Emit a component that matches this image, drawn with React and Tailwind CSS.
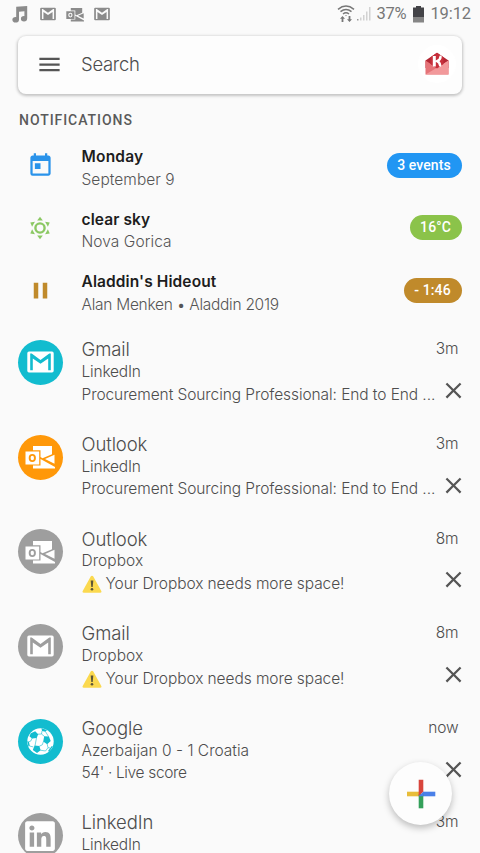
import { FaLinkedin } from "react-icons/fa";
import { MdClose, MdMenu, MdPause, MdToday } from "react-icons/md";

const infoRows = [
  {
    id: "calendar",
    icon: <MdToday className="size-[27px] text-[#2a93ea]" />,
    title: "Monday",
    titleClass: "tracking-[0.2px]",
    subtitle: "September 9",
    subtitleClass: "tracking-[0.05px]",
    pill: "3 events",
    pillClass: "w-[75px] bg-[#2196f3]",
  },
  {
    id: "weather",
    icon: <SunIcon />,
    title: "clear sky",
    titleClass: "tracking-[0.1px]",
    subtitle: "Nova Gorica",
    subtitleClass: "tracking-[0.07px]",
    pill: "16°C",
    pillClass: "w-[52px] bg-[#8bc34a]",
  },
  {
    id: "music",
    icon: <MdPause className="size-[27px] text-[#c08a2b]" />,
    title: "Aladdin's Hideout",
    titleClass: "tracking-[0.1px]",
    subtitle: "Alan Menken • Aladdin 2019",
    subtitleClass: "tracking-[-0.27px]",
    pill: "- 1:46",
    pillClass: "w-[58px] bg-[#c08a2b]",
  },
];

const messages = [
  {
    id: 1,
    icon: <GmailIcon className="w-[27px] h-[22px]" />,
    color: "bg-[#12bccf]",
    app: "Gmail",
    from: "LinkedIn",
    fromClass: "tracking-[-0.2px]",
    text: "Procurement Sourcing Professional: End to End ...",
    textClass: "tracking-[-0.08px]",
    time: "3m",
  },
  {
    id: 2,
    icon: <OutlookIcon className="w-[30px] h-[24px]" />,
    color: "bg-[#ff9809]",
    app: "Outlook",
    from: "LinkedIn",
    fromClass: "tracking-[-0.2px]",
    text: "Procurement Sourcing Professional: End to End ...",
    textClass: "tracking-[-0.08px]",
    time: "3m",
  },
  {
    id: 3,
    icon: <OutlookIcon className="w-[30px] h-[24px]" />,
    color: "bg-[#9e9e9e]",
    app: "Outlook",
    from: "Dropbox",
    fromClass: "tracking-[0.05px]",
    text: "Your Dropbox needs more space!",
    textClass: "tracking-[-0.08px]",
    warning: true,
    time: "8m",
  },
  {
    id: 4,
    icon: <GmailIcon className="w-[27px] h-[22px]" />,
    color: "bg-[#9e9e9e]",
    app: "Gmail",
    from: "Dropbox",
    fromClass: "tracking-[0.05px]",
    text: "Your Dropbox needs more space!",
    textClass: "tracking-[-0.08px]",
    warning: true,
    time: "8m",
  },
  {
    id: 5,
    icon: <FootballIcon />,
    color: "bg-[#12bccf]",
    app: "Google",
    from: "Azerbaijan 0 - 1 Croatia",
    fromClass: "tracking-[0px]",
    text: "54' · Live score",
    textClass: "tracking-[-0.35px]",
    time: "now",
  },
  {
    id: 6,
    icon: <FaLinkedin className="size-[34px]" />,
    color: "bg-[#9e9e9e]",
    app: "LinkedIn",
    from: "LinkedIn",
    fromClass: "tracking-[-0.2px]",
    text: "",
    textClass: "",
    time: "3m",
  },
];

function SunIcon() {
  return (
    <svg viewBox="0 0 24 24" className="size-[24px]" fill="#8bc863">
      <circle cx="12" cy="12" r="4.6" fill="none" stroke="#8bc863" strokeWidth="2.4" />
      {[0, 60, 120, 180, 240, 300].map((angle) => (
        <path key={angle} d="M12 .8l2.8 3.7H9.2z" transform={`rotate(${angle} 12 12)`} />
      ))}
    </svg>
  );
}

function FootballIcon() {
  return (
    <svg viewBox="0 0 27 27" className="size-[27px]">
      <circle cx="13.5" cy="13.5" r="13.2" fill="#fff" />
      <g fill="#12bccf">
        <path d="M3.8 5.2l4.400-2 3 3-1.500 3.900-4.700.4-2.600-2.300z" />
        <path d="M17.200 8.300l4.700.3 1.800 4.500-3.500 3.100-4-2.700z" />
        <path d="M7.600 17.500l4.700.5 1.400 4.300-3.700 2.700-4.200-3z" />
        <path d="M14.500 .3l5.500 1.600-1.500 1.800-3.500-.7zM24.800 18l1 .5-3.600 5.200-1.200-.8zM.3 13l1.600.8.9 4.300-1.300.3z" />
      </g>
      <path
        fill="none"
        stroke="#12bccf"
        strokeWidth=".6"
        d="M10.900 6.200l3.600-.2 3 2.500M14.500 6l.5-3M18.500 3.700l3.200 5.100M5.200 10.100l-1.500 3-1.800.7M2.800 18.100l3.500.8M9.500 9.800l-1.500 8M16.500 13.300l-1.200 3.500-3.100 1.500M20.100 15.700l.9 4-2.500 3.300-5.100-.8M21 19.700l2 .3"
      />
    </svg>
  );
}

function GmailIcon({ className }) {
  return (
    <svg viewBox="0 0 27 22" className={className}>
      <path
        fill="currentColor"
        fillRule="evenodd"
        d="M2 .5h23a1.7 1.7 0 0 1 1.7 1.7v17.6a1.7 1.7 0 0 1-1.7 1.7H2A1.7 1.7 0 0 1 .3 19.8V2.2A1.7 1.7 0 0 1 2 .5zM3.2 2.5v16.8h2.6V7.5l7.7 5.3 7.7-5.3v11.8h2.6V2.5h-1.5L13.5 8.900 4.700 2.500z"
      />
    </svg>
  );
}

function OutlookIcon({ className }) {
  return (
    <svg viewBox="0 0 30 24" className={className} fill="currentColor">
      <path d="M8 1h19v8.2l-9.5 4L15.500 12V5.300H8z" />
      <path d="M29.5 9.800v9L20 14z" />
      <path d="M8 20.500h7.500V14L30 22v1.500H8z" />
      <path fillRule="evenodd" d="M.5 6.500h13.700v13H.5zM7.300 9a3.600 4 0 1 0 0 8 3.600 4 0 1 0 0-8z" />
      <ellipse cx="7.3" cy="13" rx="1.7" ry="2.2" />
    </svg>
  );
}

function MusicIcon() {
  return (
    <svg viewBox="0 0 16 17" className="w-[16px] h-[17px]" fill="#8b8b8b">
      <path d="M4.200 .8L15.200 0v12.500h-2.800V5.300L7 5.800v8H4.200z" />
      <ellipse cx="3.7" cy="13.7" rx="3.3" ry="2.8" />
      <ellipse cx="12" cy="12.700" rx="3.100" ry="2.700" />
    </svg>
  );
}

function WifiIcon() {
  return (
    <svg viewBox="0 0 18 18" className="w-[18px] h-[18px]" fill="none" stroke="#777" strokeWidth="1.5">
      <path d="M1 4.300Q9-2.200 17 4.300M3.500 6.700Q9 2.200 14.500 6.700M6 9Q9 6.700 12 9" />
      <path fill="#777" stroke="none" d="M8 10.200h2L9 11.300zM5.500 11l2.500 2.700H6.400V17H4.600v-3.300H3zM12.500 17l2.500-2.700h-1.600V11h-1.800v3.300H10z" />
    </svg>
  );
}

function SignalIcon() {
  return (
    <svg viewBox="0 0 14 14" className="w-[14px] h-[14px]" fill="#d2d2d2">
      <path fill="#999" d="M0 12h1.500v1.500H0z" />
      <path d="M3 10.500h1.500v3H3zM6 8h1.500v5.500H6zM9 4.500h1.500v9H9zM12 0h1.500v13.500H12z" />
    </svg>
  );
}

function BatteryIcon() {
  return (
    <svg viewBox="0 0 11 17" className="w-[11px] h-[17px]">
      <path fill="#434347" d="M3 0h5v1.500h3V11H0V1.500h3z" />
      <path fill="#858585" d="M0 11h11v5.500H0z" />
    </svg>
  );
}

function AccountLogo() {
  return (
    <svg viewBox="0 0 24 23" className="w-[24px] h-[23px]">
      <path fill="#b32633" d="M.5 8.500L12 .8l11.500 7.700V16H.5z" />
      <path fill="#e57378" d="M.5 8.500L12 16l11.500-7.500v14H.5z" />
      <path fill="#f2999b" d="M.5 22.500L14 14.500l9.500-6v14z" />
      <path fill="#c72f3b" d="M5.500 5.200L12 .8l6.500 4.400V12L12 16.500 5.500 12z" />
      <path fill="none" stroke="#fff" strokeWidth="3" d="M9.300 4v10.500" />
      <path fill="none" stroke="#fff" strokeWidth="2.5" strokeLinecap="round" d="M15.500 4.800c0 2.200-1.600 3.700-3.400 4.400 1.700.7 2.800 2.300 3 4.300" />
    </svg>
  );
}

function WarningIcon() {
  return (
    <svg viewBox="0 0 20 18" className="w-[20px] h-[18px] shrink-0">
      <path fill="#fbd94f" d="M10 .7c.6 0 1 .3 1.300.8l8 14.500c.5.900 0 1.700-1 1.700H1.700c-1 0-1.500-.8-1-1.700l8-14.500c.3-.5.700-.8 1.300-.8z" />
      <path fill="#5c5537" d="M8.700 5.500h2.600l-.6 6.500H9.300z" />
      <circle cx="10" cy="14.3" r="1.3" fill="#5c5537" />
    </svg>
  );
}

function StatusBar() {
  return (
    <header className="flex h-7 items-center justify-between pl-[12px] pr-[9px]">
      <div className="flex items-center text-[#8b8b8b]">
        <MusicIcon />
        <GmailIcon className="ml-[12px] h-[14px] w-[16px]" />
        <OutlookIcon className="ml-[10px] h-[15px] w-[18px]" />
        <GmailIcon className="ml-[10px] h-[14px] w-[16px]" />
      </div>
      <div className="flex items-center font-[Roboto,sans-serif] text-[16.5px] text-[#777]">
        <WifiIcon />
        <span className="ml-[2px]">
          <SignalIcon />
        </span>
        <span className="ml-[5px] w-[29px] tracking-[-0.2px] whitespace-nowrap">37%</span>
        <span className="ml-[8px]">
          <BatteryIcon />
        </span>
        <span className="ml-[6px] tracking-[-0.1px]">19:12</span>
      </div>
    </header>
  );
}

function InfoRow({ row }) {
  return (
    <li className="flex h-[62.75px]">
      <div className="flex h-[40px] w-[45px] shrink-0 items-center justify-center">{row.icon}</div>
      <div className="ml-[19px] min-w-0 flex-1 pt-[0.8px] whitespace-nowrap leading-[22.75px]">
        <p className={`text-[15.5px] font-semibold text-[#1d1d1d] ${row.titleClass}`}>{row.title}</p>
        <p className={`text-[15.5px] font-light text-[#555] ${row.subtitleClass}`}>{row.subtitle}</p>
      </div>
      <span
        className={`mt-[7.5px] flex h-[25px] shrink-0 items-center justify-center rounded-full font-[Roboto,sans-serif] text-[14px] font-medium tracking-[0.1px] text-white ${row.pillClass}`}
      >
        {row.pill}
      </span>
    </li>
  );
}

function MessageRow({ message }) {
  return (
    <li className="flex h-[94.65px]">
      <div
        className={`mt-[2.5px] flex size-[45px] shrink-0 items-center justify-center rounded-full text-white ${message.color}`}
      >
        {message.icon}
      </div>
      <div className="ml-[19px] min-w-0 flex-1 pt-[0.8px] whitespace-nowrap text-[15.5px] font-light leading-[22.75px] text-[#4d4d4d]">
        <p className="text-[18.5px] tracking-[-0.1px]">{message.app}</p>
        <p className={message.fromClass}>{message.from}</p>
        <p className={`flex items-center gap-[4px] ${message.textClass}`}>
          {message.warning ? <WarningIcon /> : null}
          <span>{message.text}</span>
        </p>
      </div>
      <div className="flex shrink-0 flex-col items-end pt-[0.8px]">
        <span className="pr-[3px] text-[15.5px] font-light leading-[22.75px] tracking-[-0.1px] text-[#4d4d4d]">
          {message.time}
        </span>
        <button type="button" aria-label="Dismiss" className="mt-[16px] -mr-[5px] text-[#555]">
          <MdClose className="size-[27px]" />
        </button>
      </div>
    </li>
  );
}

export default function App() {
  return (
    <div className="relative h-[853px] w-[480px] overflow-hidden bg-[#fafafa] font-[Inter,sans-serif]">
      <StatusBar />

      <div className="mx-[18px] mt-2 flex h-[57.5px] items-center rounded-[8px] bg-[#fdfdfd] pl-[18px] pr-[6px] shadow-[0_1px_3px_1px_rgba(0,0,0,0.22)]">
        <MdMenu className="size-[27px] text-[#555]" />
        <span className="ml-[18px] flex-1 text-[18.5px] font-light tracking-[-0.3px] text-[#4d4d4d]">Search</span>
        <span className="-mt-[2px] flex size-[38px] items-center justify-center rounded-full bg-white">
          <AccountLogo />
        </span>
      </div>

      <h2 className="ml-[19px] mt-[16.5px] h-[20px] font-[Roboto,sans-serif] text-[14px] font-medium leading-[20px] tracking-[0.95px] text-[#5a5a5a]">
        NOTIFICATIONS
      </h2>

      <ul className="mt-[15.2px] pl-[17.5px] pr-[18.5px]">
        {infoRows.map((row) => (
          <InfoRow key={row.id} row={row} />
        ))}
      </ul>

      <ul className="mt-[4px] pl-[17.5px] pr-[18.5px]">
        {messages.map((message) => (
          <MessageRow key={message.id} message={message} />
        ))}
      </ul>

      <button
        type="button"
        aria-label="Add"
        className="absolute left-[389px] top-[762px] flex size-[63px] items-center justify-center rounded-full bg-[#fdfdfd] shadow-[0_3px_7px_rgba(0,0,0,0.25)]"
      >
        <svg viewBox="0 0 30 30" className="size-[30px]">
          <path fill="#e8bd3a" d="M1 12.700h12v4.600H1z" />
          <path fill="#4a80e8" d="M17 12.700h12.300v4.600H17z" />
          <path fill="#34a05a" d="M12.700 15h4.600v14.300h-4.600z" />
          <path fill="#d8453c" d="M12.700 .7h4.600v12l-4.600 4.600z" />
          <path fill="#4a80e8" d="M17.300 12.700v4.600h-4.600z" />
        </svg>
      </button>
    </div>
  );
}
